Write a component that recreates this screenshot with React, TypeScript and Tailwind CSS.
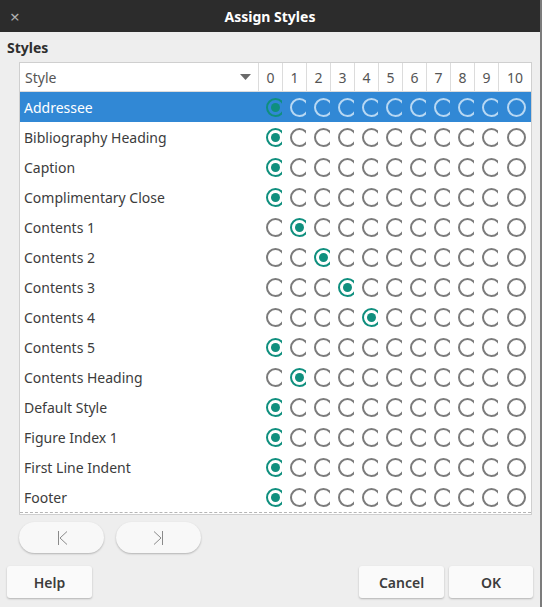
const styles: [string, number][] = [
  ["Addressee", 0],
  ["Bibliography Heading", 0],
  ["Caption", 0],
  ["Complimentary Close", 0],
  ["Contents 1", 1],
  ["Contents 2", 2],
  ["Contents 3", 3],
  ["Contents 4", 4],
  ["Contents 5", 0],
  ["Contents Heading", 1],
  ["Default Style", 0],
  ["Figure Index 1", 0],
  ["First Line Indent", 0],
  ["Footer", 0],
];

const levels = [0, 1, 2, 3, 4, 5, 6, 7, 8, 9, 10];

function Radio({ on, active, last }: { on: boolean; active: boolean; last: boolean }) {
  const ring = on
    ? "border-[#0f8f7e]"
    : active
      ? "border-[#b8d8f3]"
      : "border-[#7b7b7b]";
  return (
    <div className={last ? "ml-[7px] h-[19px] w-[19px]" : "ml-[6px] h-[19px] w-[16px] overflow-hidden"}>
      <div className={`flex h-[19px] w-[19px] items-center justify-center rounded-full border-2 ${ring}`}>
        {on && <div className="h-[9px] w-[9px] rounded-full bg-[#0f8f7e]" />}
      </div>
    </div>
  );
}

export default function App() {
  return (
    <div className="flex h-[607px] w-[542px] font-['Noto_Sans',sans-serif] text-[#3c3c3c]">
      <div className="flex w-[540px] flex-col bg-[#eeeeee]">
        <div className="grid h-[32px] grid-cols-[40px_1fr_40px] items-center bg-[#2c2c2c]">
          <span className="pl-[10px] text-[17px] leading-none text-[#b0b0b0]">×</span>
          <span className="text-center text-[14px] font-bold text-white">Assign Styles</span>
          <span />
        </div>

        <div className="flex flex-1 flex-col px-[7px]">
          <div className="mt-[6px] text-[14px] font-bold leading-[20px] text-[#2e2e2e]">Styles</div>

          <div className="ml-[12px] mt-[4px] w-[513px] border border-[#cfcfcf] bg-white">
            <div className="flex h-[29px] items-center border-b border-[#dcdcdc] text-[14px] text-[#555]">
              <div className="flex h-full w-[239px] items-center justify-between border-r border-[#dcdcdc] pl-[5px] pr-[7px]">
                <span>Style</span>
                <svg width="11" height="6" viewBox="0 0 11 6">
                  <path d="M0 0h11L5.5 6z" fill="#6a6a6a" />
                </svg>
              </div>
              {levels.map((n) => (
                <div
                  key={n}
                  className={`flex h-full items-center justify-center ${n === 10 ? "flex-1" : "w-[24px] border-r border-[#dcdcdc]"}`}
                >
                  {n}
                </div>
              ))}
            </div>

            {styles.map(([name, sel], i) => {
              const active = i === 0;
              return (
                <div
                  key={name}
                  className={`flex h-[30px] items-center text-[14px] ${active ? "bg-[#3188d5] text-white" : ""}`}
                >
                  <div className="w-[240px] pl-[4px]">{name}</div>
                  {levels.map((n) => (
                    <div key={n} className={n === 10 ? "flex-1" : "w-[24px]"}>
                      <Radio on={n === sel} active={active} last={n === 10} />
                    </div>
                  ))}
                </div>
              );
            })}
            <div className="h-[2px] border-t border-dashed border-[#b5b5b5]" />
          </div>

          <div className="ml-[12px] mt-[7px] flex gap-[12px]">
            <button className="flex h-[31px] w-[85px] items-center justify-center rounded-full bg-[#f8f8f8] shadow-[0_1px_2px_rgba(0,0,0,0.25)]">
              <svg width="14" height="16" viewBox="0 0 14 16" fill="none" stroke="#8a8a8a" strokeWidth="1">
                <path d="M3.5 1v14M12 1.5L5 8l7 6.5" />
              </svg>
            </button>
            <button className="flex h-[31px] w-[85px] items-center justify-center rounded-full bg-[#f8f8f8] shadow-[0_1px_2px_rgba(0,0,0,0.25)]">
              <svg width="14" height="16" viewBox="0 0 14 16" fill="none" stroke="#8a8a8a" strokeWidth="1">
                <path d="M10.5 1v14M2 1.5L9 8l-7 6.5" />
              </svg>
            </button>
          </div>

          <div className="mt-[13px] flex items-center text-[14px] font-semibold text-[#3c3c3c]">
            <button className="h-[32px] w-[85px] rounded-[3px] bg-[#fafafa] shadow-[0_1px_2px_rgba(0,0,0,0.25)]">Help</button>
            <div className="flex-1" />
            <button className="h-[32px] w-[85px] rounded-[3px] bg-[#fafafa] shadow-[0_1px_2px_rgba(0,0,0,0.25)]">Cancel</button>
            <button className="ml-[5px] h-[32px] w-[84px] rounded-[3px] bg-[#fafafa] shadow-[0_1px_2px_rgba(0,0,0,0.25)]">OK</button>
          </div>
        </div>
      </div>
      <div className="w-[2px] bg-[#7c7c7c]" />
    </div>
  );
}
